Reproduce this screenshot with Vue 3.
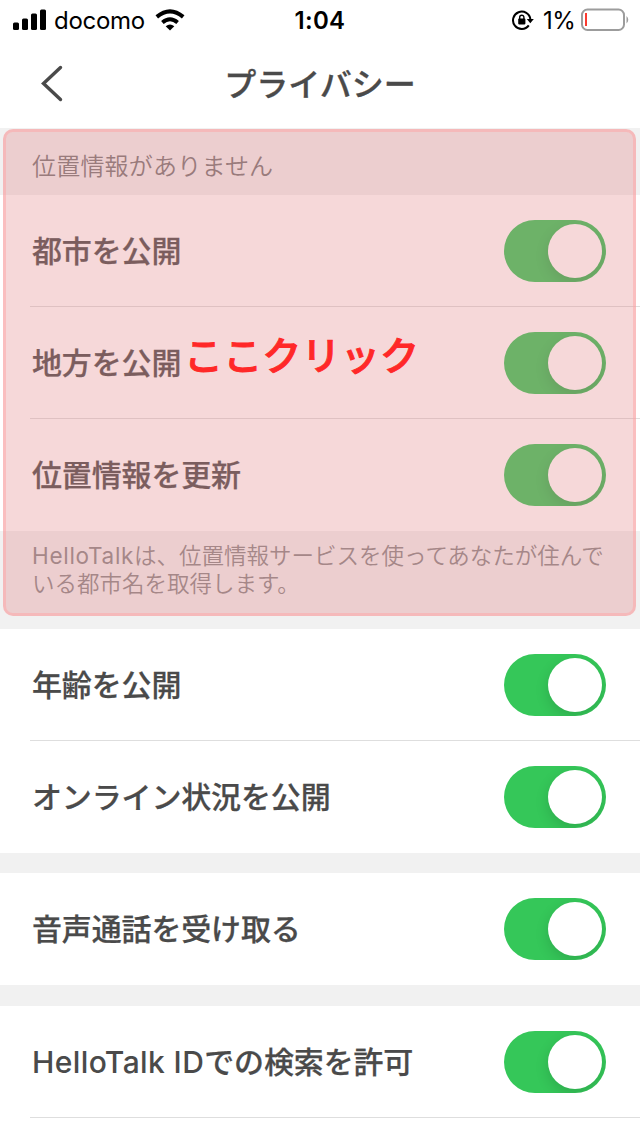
<script setup>
const locationRows = ['都市を公開', '地方を公開', '位置情報を更新']
const profileRows = ['年齢を公開', 'オンライン状況を公開']
</script>

<template>
  <div class="screen">
    <header class="status">
      <div class="carrier">
        <svg width="34" height="22" viewBox="0 0 34 22">
          <rect x="0" y="13.500" width="6" height="7.500" rx="1.500" />
          <rect x="9" y="9.500" width="6" height="11.500" rx="1.500" />
          <rect x="18" y="4.500" width="6" height="16.500" rx="1.500" />
          <rect x="27" y="0.500" width="6" height="20.500" rx="1.500" />
        </svg>
        <span class="name">docomo</span>
        <svg class="wifi" width="30" height="22" viewBox="0 0 30 22">
          <path d="M15 21.500 L10.700 17.200 Q15 13.900 19.300 17.200 Z" />
          <path d="M7.400 13.500 Q15 7.100 22.600 13.500" fill="none" stroke="#000" stroke-width="4" />
          <path d="M1.800 7.900 Q15 -3.100 28.200 7.900" fill="none" stroke="#000" stroke-width="4" />
        </svg>
      </div>
      <div class="time">1:04</div>
      <div class="power">
        <svg width="22" height="22" viewBox="0 0 22 22">
          <path d="M16.800 16.400 A8.700 8.700 0 1 1 18.400 10.500" fill="none" stroke="#000" stroke-width="2" />
          <path d="M14.800 10 H21.800 L18.300 14.200 Z" />
          <rect x="6.200" y="9.600" width="7.200" height="5.800" rx="0.800" />
          <path d="M7.700 10 V8.300 a2.100 2.100 0 0 1 4.200 0 V10" fill="none" stroke="#000" stroke-width="1.400" />
        </svg>
        <span class="percent">1%</span>
        <svg width="48" height="24" viewBox="0 0 48 24">
          <rect x="1" y="1.500" width="42" height="20.500" rx="5.500" fill="#fff" stroke="#9c9c9c" stroke-width="2" />
          <rect x="4" y="5" width="2" height="13" fill="#fb3b30" />
          <path d="M45.500 8 Q49 11.700 45.500 15.500 Z" fill="#9c9c9c" />
        </svg>
      </div>
    </header>

    <nav class="nav">
      <svg class="back" width="24" height="38" viewBox="0 0 24 38">
        <path d="M20.500 2.500 L3.500 18.500 L20.500 34.500" fill="none" stroke="#4a4a4a" stroke-width="3.400" stroke-linecap="round" />
      </svg>
      <h1>プライバシー</h1>
    </nav>

    <section class="location">
      <p class="notice">位置情報がありません</p>
      <div
        v-for="(label, i) in locationRows"
        :key="label"
        class="row"
        :class="{ divided: i < locationRows.length - 1 }"
      >
        <span>{{ label }}</span>
        <i class="toggle"></i>
      </div>
      <p class="hint"><span class="latin">HelloTalk</span>は、位置情報サービスを使ってあなたが住んで<br />いる都市名を取得します。</p>
      <div class="highlight"></div>
      <strong class="callout">ここクリック</strong>
    </section>

    <section class="group">
      <div
        v-for="(label, i) in profileRows"
        :key="label"
        class="row"
        :class="{ divided: i < profileRows.length - 1 }"
      >
        <span>{{ label }}</span>
        <i class="toggle"></i>
      </div>
    </section>

    <section class="group calls">
      <div class="row">
        <span>音声通話を受け取る</span>
        <i class="toggle"></i>
      </div>
    </section>

    <section class="group search">
      <div class="row divided">
        <span><span class="latin">HelloTalk ID</span>での検索を許可</span>
        <i class="toggle"></i>
      </div>
    </section>
  </div>
</template>

<style>
body {
  margin: 0;
}
</style>

<style scoped>
.screen {
  width: 640px;
  height: 1136px;
  overflow: hidden;
  background: #fff;
  color: #4a4a4a;
  font-family: "Noto Sans CJK JP", sans-serif;
}
.status {
  height: 40px;
  display: grid;
  grid-template-columns: 1fr auto 1fr;
  align-items: center;
  color: #000;
  font-family: Inter, sans-serif;
  font-size: 24px;
}
.carrier {
  display: flex;
  align-items: center;
  padding-left: 13px;
}
.name {
  margin-left: 7px;
  width: 92px;
  letter-spacing: -0.3px;
}
.wifi {
  margin-left: 9px;
}
.time {
  font-weight: 600;
  letter-spacing: 0.3px;
}
.power {
  display: flex;
  align-items: center;
  justify-content: flex-end;
  padding-right: 11px;
}
.percent {
  width: 32px;
  margin: 0 6px 0 9px;
  letter-spacing: -0.5px;
}
.nav {
  height: 88px;
  display: grid;
  grid-template-columns: 100px 1fr 100px;
  align-items: center;
}
.back {
  margin-left: 40px;
}
h1 {
  margin: 0;
  padding-bottom: 4px;
  text-align: center;
  font-size: 32px;
  line-height: 40px;
  font-weight: 500;
  -webkit-text-stroke: 0.3px currentColor;
}
.location {
  position: relative;
  height: 501px;
  background: #f1f1f1;
}
p {
  margin: 0;
}
.notice {
  height: 67px;
  padding-left: 32px;
  font-size: 24px;
  line-height: 73px;
  font-weight: 350;
  letter-spacing: 0.2px;
  color: #777;
}
.row {
  box-sizing: border-box;
  height: 112px;
  padding: 0 34px 0 32px;
  display: flex;
  align-items: center;
  justify-content: space-between;
  background: #fff;
  font-size: 30px;
  line-height: 44px;
  letter-spacing: -0.15px;
  font-weight: 500;
}
.row > span {
  padding-bottom: 4px;
  -webkit-text-stroke: 0.25px currentColor;
}
.row.divided {
  background: linear-gradient(#dedede, #dedede) 30px 111px / 610px 1px no-repeat #fff;
}
.latin {
  font-family: Inter, sans-serif;
  line-height: 1;
}
.row .latin {
  letter-spacing: 0.4px;
  -webkit-text-stroke: 0;
}
.toggle {
  box-sizing: border-box;
  width: 102px;
  height: 62px;
  border-radius: 31px;
  padding: 4px;
  overflow: hidden;
  background: #35c759;
}
.toggle::before {
  content: "";
  display: block;
  width: 54px;
  height: 54px;
  margin-left: 40px;
  border-radius: 50%;
  background: #fff;
  box-shadow: 0 5px 14px rgba(0, 0, 0, 0.14);
}
.hint {
  padding: 9px 0 0 32px;
  font-size: 22.5px;
  line-height: 28px;
  font-weight: 350;
  color: #888;
  white-space: nowrap;
}
.hint .latin {
  font-weight: 400;
  letter-spacing: 0.7px;
}
.highlight {
  position: absolute;
  box-sizing: border-box;
  left: 3px;
  top: 1px;
  width: 633px;
  height: 487px;
  border: 3px solid rgba(255, 165, 165, 0.5);
  border-radius: 10px;
  background: rgba(226, 134, 136, 0.32);
}
.callout {
  position: absolute;
  left: 184px;
  top: 196px;
  font-size: 39.2px;
  line-height: 58px;
  font-weight: 500;
  -webkit-text-stroke: 0.9px currentColor;
  color: #ff2828;
}
.group {
  background: #fff;
}
.calls {
  border-top: 20px solid #f1f1f1;
}
.search {
  border-top: 21px solid #f1f1f1;
}
</style>
